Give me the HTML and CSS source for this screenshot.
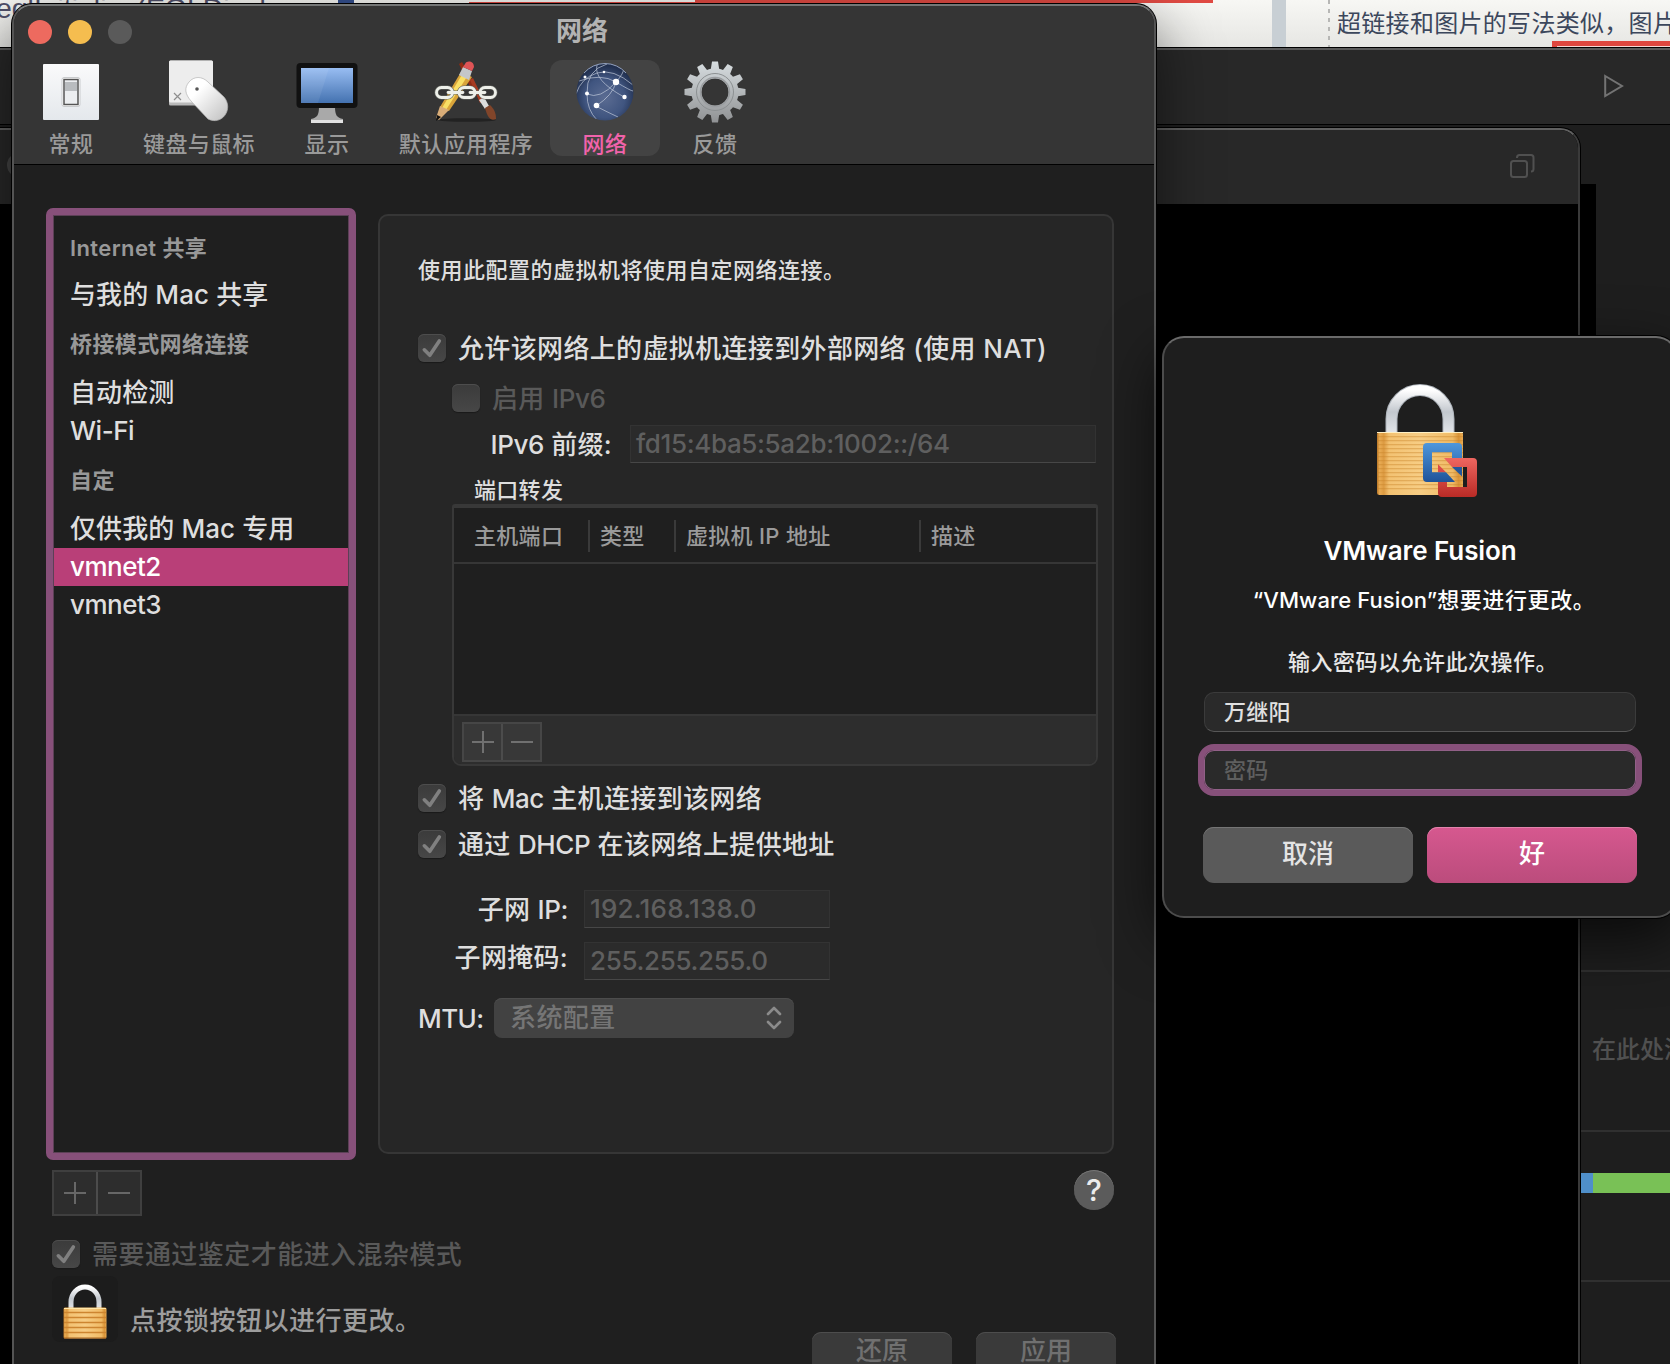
FILE: index.html
```html
<!DOCTYPE html>
<html lang="zh-CN">
<head>
<meta charset="utf-8">
<title>网络</title>
<link rel="stylesheet" href="styles.css">
</head>
<body>
<svg class="defs" width="0" height="0" aria-hidden="true">
  <defs>
    <linearGradient id="steel" x1="0" y1="0" x2="0" y2="1"><stop offset="0" stop-color="#fff"/><stop offset=".5" stop-color="#c3c8ce"/><stop offset="1" stop-color="#e3e6ea"/></linearGradient>
    <linearGradient id="brass" x1="0" y1="0" x2="1" y2="0"><stop offset="0" stop-color="#b87425"/><stop offset=".03" stop-color="#e9ac54"/><stop offset=".08" stop-color="#dc9a41"/><stop offset=".14" stop-color="#f3c272"/><stop offset=".5" stop-color="#f7cd84"/><stop offset=".88" stop-color="#f0bb66"/><stop offset=".95" stop-color="#d99438"/><stop offset="1" stop-color="#e9ac54"/></linearGradient>
    <pattern id="lines" width="8" height="4" patternUnits="userSpaceOnUse"><rect width="8" height="1.3" fill="#c98428" opacity=".42"/></pattern>
    <symbol id="tick" viewBox="0 0 28 28"><path d="M6.3 15.8 11.8 21.3 21.3 7" fill="none" stroke="#808080" stroke-width="3.6" stroke-linecap="round" stroke-linejoin="round"/></symbol>
  </defs>
</svg>
<div class="desktop">
  <div class="docs">
    <div class="code-line">eglInitialize(EGLDisplay</div>
    <i class="tab-mark"></i><i class="red-thin"></i><i class="red-thick"></i>
    <i class="gutter"></i><i class="dashes"></i>
    <div class="doc-text">超链接和图片的写法类似，图片</div>
    <i class="red-box"></i>
  </div>

  <div class="studio">
    <div class="studio-bar">
      <svg width="24" height="26" viewBox="0 0 24 26"><path d="M3.2 3 20 13 3.2 23Z" fill="none" stroke="#737373" stroke-width="2"/></svg>
    </div>
    <div class="studio-side">
      <div class="side-cell gap"></div>
      <div class="side-cell note">在此处添加</div>
      <div class="side-cell meter"><i></i><b></b></div>
      <div class="side-cell last"></div>
    </div>
  </div>
  <i class="black-sheet"></i>

  <div class="vm">
    <div class="vm-bar">
      <i class="vm-dot"></i>
      <svg width="26" height="26" viewBox="0 0 26 26" fill="none" stroke="#505050" stroke-width="2"><rect x="2" y="8" width="16" height="16" rx="2.5"/><path d="M8 5V4.500a2.500 2.500 0 0 1 2.500-2.500H22a2.500 2.500 0 0 1 2.500 2.500V16a2.500 2.500 0 0 1-2.500 2.500"/></svg>
    </div>
  </div>

  <main class="prefs">
    <header class="prefs-head">
      <div class="titlebar">
        <div class="lights"><i class="close"></i><i class="min"></i><i class="zoom"></i></div>
        <h1>网络</h1>
      </div>
      <nav class="tools">
        <div class="tool">
          <svg width="64" height="64" viewBox="0 0 64 64"><defs><linearGradient id="plate" x1="0" y1="0" x2="0" y2="1"><stop offset="0" stop-color="#fafafb"/><stop offset="1" stop-color="#e4e8ec"/></linearGradient></defs><rect x="4" y="4" width="56" height="56" rx="1" fill="url(#plate)"/><rect x="23" y="17.500" width="18" height="29" rx="2" fill="#fff" stroke="#c9cbcd"/><rect x="25" y="19.500" width="14" height="25" fill="#eceef0" stroke="#555" stroke-width="1.500"/><rect x="26" y="22" width="12" height="9" fill="#b9bcbf"/></svg>
          <span>常规</span>
        </div>
        <div class="tool wide">
          <svg width="64" height="64" viewBox="0 0 64 64"><defs><linearGradient id="mouse" x1="0" y1="0" x2="1" y2="1"><stop offset=".3" stop-color="#fff"/><stop offset="1" stop-color="#bfbfbf"/></linearGradient></defs><rect x="2" y="0.500" width="44" height="45" rx="1.500" fill="#b9b9b9"/><rect x="2" y="0.500" width="44" height="42" rx="1.500" fill="#ededed"/><path d="m7 33 7 7m0-7-7 7" stroke="#8d8d8d" stroke-width="1.200"/><path d="M22 22C27 16 35 16 41 22L57 37C67 49 55 66 41 59L24 41C18 34 17 28 22 22Z" fill="url(#mouse)" stroke="#b4b4b4" stroke-width=".7"/><circle cx="30" cy="29" r="1.800" fill="#555"/></svg>
          <span>键盘与鼠标</span>
        </div>
        <div class="tool">
          <svg width="64" height="64" viewBox="0 0 64 64"><defs><linearGradient id="screen" x1="0" y1="0" x2="0" y2="1"><stop offset="0" stop-color="#98bdf2"/><stop offset="1" stop-color="#4472b0"/></linearGradient></defs><path d="M24 47h16c0 8 2 11 8 12v4H16v-4c6-1 8-4 8-12Z" fill="#a9a9a9"/><path d="M16 60h32v3H16Z" fill="#e2e2e2"/><rect x="1.500" y="3" width="61" height="45" rx="4" fill="#111"/><rect x="6" y="8" width="52" height="35" fill="url(#screen)"/><path d="M6 8H34L23 43H6Z" fill="#fff" opacity=".07"/></svg>
          <span>显示</span>
        </div>
        <div class="tool wider">
          <svg width="64" height="64" viewBox="0 0 64 64"><ellipse cx="33" cy="60" rx="29" ry="1.800" fill="#222"/><path d="m25 4 3-2 14 24-5 3Z" fill="#8f2b15"/><path d="m36 20 3-2 11 23-4 2Z" fill="#a63a20"/><path d="m45 40 5-3 5 9-4 3Z" fill="#ddd"/><path d="m51 48 5-3c5 5 6 9 6 14-5 2-8 0-11-11Z" fill="#81452a"/><path d="M27 12 38 17 15 51 6 47Z" fill="#d9a43a"/><path d="m29 13 5 2L12 50l-4-2Z" fill="#f9df65"/><path d="M6 46 15 50 5 60 2 58Z" fill="#d9ad78"/><path d="m3 55 4 2-5 4Z" fill="#111"/><path d="m29 7 9 4-3 9-10-5Z" fill="#c4c7c9"/><path d="M31 4c2-4 9-3 9 3l-2 4-9-4Z" fill="#df5456"/><g fill="none" stroke="#6b6d67" stroke-width="4"><rect x="2.500" y="27.500" width="16" height="10" rx="5"/><rect x="25" y="27.500" width="16" height="10" rx="5"/><rect x="46" y="27.500" width="15.500" height="10" rx="5"/><path d="M14 32.500h15M36 32.500h15"/></g><g fill="none" stroke="#eef0ea" stroke-width="2.800" stroke-linecap="round"><rect x="2.500" y="27.500" width="16" height="10" rx="5"/><rect x="25" y="27.500" width="16" height="10" rx="5"/><rect x="46" y="27.500" width="15.500" height="10" rx="5"/><path d="M14 32.500h15M36 32.500h15"/></g></svg>
          <span>默认应用程序</span>
        </div>
        <div class="tool selected">
          <svg width="64" height="64" viewBox="0 0 64 64"><defs><radialGradient id="globe" cx=".5" cy=".6" r=".58"><stop offset="0" stop-color="#5b6c92"/><stop offset=".6" stop-color="#405580"/><stop offset="1" stop-color="#1e2c4a"/></radialGradient><clipPath id="ball"><circle cx="32" cy="32" r="28.300"/></clipPath></defs><circle cx="32" cy="32" r="28.500" fill="url(#globe)"/><g clip-path="url(#ball)"><g fill="none" stroke="#c3ccdd" stroke-width=".8" opacity=".85"><path d="M3 34Q8 18 24 13T60 25M6 21Q28 13 43 22T60 31M14 34Q27 40 43 22T42 3M14 34Q13 10 34 4M14 34Q14 50 24 60M23 46Q40 35 43 22M23 46Q30 50 45 57M24 5Q20 20 51 37"/></g><g fill="#fff"><circle cx="43" cy="22" r="3.200"/><circle cx="23.500" cy="45.500" r="2.800"/><circle cx="51.500" cy="37" r="2.200"/><circle cx="14" cy="33.500" r="2"/><circle cx="12" cy="17" r="1.500"/><circle cx="31" cy="12" r="1.300"/></g></g><path d="M11 13A28 28 0 0 1 53 13" fill="none" stroke="#93a2c0" stroke-width="1"/></svg>
          <span>网络</span>
        </div>
        <div class="tool">
          <svg width="64" height="64" viewBox="-32 -32 64 64"><defs><linearGradient id="gear" gradientUnits="userSpaceOnUse" x1="0" y1="-31" x2="0" y2="31"><stop offset="0" stop-color="#d8dee1"/><stop offset="1" stop-color="#8f9193"/></linearGradient><path id="bar" d="M-3-30.500H3L4.300-22V22L3 30.500H-3L-4.300 22V-22Z"/><mask id="hole"><rect x="-32" y="-32" width="64" height="64" fill="#fff"/><circle r="13.500" fill="#000"/></mask></defs><g mask="url(#hole)"><rect x="-32" y="-32" width="64" height="64" fill="url(#gear)" clip-path="url(#gearshape)"/></g><clipPath id="gearshape"><circle r="23.500"/><use href="#bar"/><use href="#bar" transform="rotate(30)"/><use href="#bar" transform="rotate(60)"/><use href="#bar" transform="rotate(90)"/><use href="#bar" transform="rotate(120)"/><use href="#bar" transform="rotate(150)"/></clipPath><circle r="18.500" fill="none" stroke="#8c9092" stroke-width="1"/><circle r="14.500" fill="none" stroke="#9a9da0" stroke-width="1.500"/></svg>
          <span>反馈</span>
        </div>
      </nav>
    </header>

    <section class="columns">
      <aside class="nets">
        <h2>Internet 共享</h2>
        <p>与我的 Mac 共享</p>
        <h2>桥接模式网络连接</h2>
        <p>自动检测</p>
        <p class="latin">Wi-Fi</p>
        <h2>自定</h2>
        <p>仅供我的 Mac 专用</p>
        <p class="latin active">vmnet2</p>
        <p class="latin">vmnet3</p>
      </aside>

      <div class="panel">
        <p class="intro">使用此配置的虚拟机将使用自定网络连接。</p>
        <div class="check nat"><i><svg><use href="#tick"/></svg></i><span>允许该网络上的虚拟机连接到外部网络 (使用 NAT)</span></div>
        <div class="check ipv6 dim"><i></i><span>启用 <em>IPv6</em></span></div>
        <div class="field-row prefix"><label><em>IPv6</em> 前缀:</label><div class="field">fd15:4ba5:5a2b:1002::/64</div></div>
        <p class="ports-title">端口转发</p>
        <div class="ports">
          <div class="ports-head"><span>主机端口</span><span>类型</span><span>虚拟机 IP 地址</span><span>描述</span></div>
          <div class="ports-list"></div>
          <div class="ports-foot"><div class="pm small"><b><svg viewBox="0 0 22 22"><path d="M0 11H22M11 0V22"/></svg></b><b><svg viewBox="0 0 22 22"><path d="M0 11H22"/></svg></b></div></div>
        </div>
        <div class="check host"><i><svg><use href="#tick"/></svg></i><span>将 <em>Mac</em> 主机连接到该网络</span></div>
        <div class="check dhcp"><i><svg><use href="#tick"/></svg></i><span>通过 <em>DHCP</em> 在该网络上提供地址</span></div>
        <div class="field-row subnet"><label>子网 <em>IP:</em></label><div class="field ip">192.168.138.0</div></div>
        <div class="field-row subnet mask"><label>子网掩码:</label><div class="field">255.255.255.0</div></div>
        <div class="mtu"><label>MTU:</label><div class="popup"><span>系统配置</span><svg width="16" height="24" viewBox="0 0 16 24"><path d="m2 8 6-6 6 6M2 16l6 6 6-6" fill="none" stroke="#8b8b8b" stroke-width="2.600" stroke-linecap="round" stroke-linejoin="round"/></svg></div></div>
      </div>
    </section>

    <div class="under">
      <div class="pm"><b><svg viewBox="0 0 22 22"><path d="M0 11H22M11 0V22"/></svg></b><b><svg viewBox="0 0 22 22"><path d="M0 11H22"/></svg></b></div>
      <div class="help">?</div>
    </div>
    <div class="check promisc dim"><i><svg><use href="#tick"/></svg></i><span>需要通过鉴定才能进入混杂模式</span></div>
    <footer class="foot">
      <div class="lock"><svg width="44" height="56" viewBox="0 0 88 112"><path d="M16 52V36a28 30 0 0 1 56 0V52" fill="none" stroke="url(#steel)" stroke-width="10"/><rect x="1" y="47" width="86" height="62" rx="3" fill="url(#brass)"/><path d="M2 57H86M2 67H86M2 77H86M2 87H86M2 97H86" stroke="#cd8530" stroke-width="3"/><path d="M2 49H86" stroke="#ffe6a8" stroke-width="2"/><path d="M2 108H86" stroke="#a6601c" stroke-width="2"/></svg></div>
      <span>点按锁按钮以进行更改。</span>
      <div class="foot-btns"><b>还原</b><b>应用</b></div>
    </footer>
  </main>

  <section class="auth">
    <svg class="auth-icon" width="102" height="114" viewBox="0 0 102 114">
      <defs>
        <linearGradient id="fb" x1="0" y1="0" x2="0" y2="1"><stop offset="0" stop-color="#4f97dc"/><stop offset="1" stop-color="#1f5399"/></linearGradient>
        <linearGradient id="fr" x1="0" y1="0" x2="0" y2="1"><stop offset="0" stop-color="#ee6660"/><stop offset="1" stop-color="#b92b26"/></linearGradient>
      </defs>
      <path d="M15.500 50V35a28.500 29 0 0 1 57 0V50" fill="none" stroke="#aeb4bb" stroke-width="12"/>
      <path d="M15.500 50V35a28.500 29 0 0 1 57 0V50" fill="none" stroke="url(#steel)" stroke-width="10"/>
      <rect x="1" y="48" width="86" height="63" rx="2.500" fill="url(#brass)"/>
      <rect x="1" y="50" width="86" height="58" fill="url(#lines)"/>
      <path d="M1 48.500H87" stroke="#fff0c4"/>
      <path d="M62 98V109q0 4 4 4H97q4 0 4-4V78q0-4-4-4H68L76 83H91V103H71V98Z" fill="url(#fr)"/>
      <path d="M62 80.300 70 88.300H62Z" fill="#dc4a49"/>
      <path d="M51 59H82q4 0 4 4V74H76V68.300H56V88.300H70L79 98H51q-4 0-4-4V63q0-4 4-4Z" fill="url(#fb)"/>
      <path d="M76 83H86V92.500Z" fill="#24579c"/>
    </svg>
    <h2>VMware Fusion</h2>
    <p class="wants">“VMware Fusion”<span>想要进行更改。</span></p>
    <p class="ask">输入密码以允许此次操作。</p>
    <div class="input">万继阳</div>
    <div class="input focus">密码</div>
    <div class="auth-btns"><b>取消</b><b class="ok">好</b></div>
  </section>
</div>
</body>
</html>
```
FILE: styles.css
```css
* { box-sizing: border-box; margin: 0; padding: 0; }
body { background: #000; font-family: Inter, "Noto Sans CJK SC", sans-serif; font-size: 26px; font-weight: 500; color: #dedede; overflow: hidden; }
i, b { display: block; font-style: normal; font-weight: 500; }
em { font-style: normal; letter-spacing: -.4px; }
svg { display: block; flex: none; }
h1, h2, p, span, label { white-space: nowrap; }
.defs { position: absolute; }
.desktop { position: relative; width: 1670px; height: 1364px; overflow: hidden; background: #000; }

/* document window at the very back */
.docs { position: absolute; inset: 0 0 auto; height: 48px; background: linear-gradient(#f7f7f4, #e6e6e3); overflow: hidden; }
.docs > * { position: absolute; }
.code-line { left: -4px; top: -7px; font: 28.4px/30px "Liberation Sans", sans-serif; color: #50506a; }
.tab-mark { left: 338px; top: 0; width: 16px; height: 4px; background: #35508f; }
.red-thin { left: 469px; top: 2px; width: 226px; height: 2px; background: #df4a43; }
.red-thick { left: 695px; top: 0; width: 518px; height: 3px; background: #e04a43; }
.gutter { left: 1272px; top: 0; width: 14px; height: 48px; background: #c8cfd4; }
.dashes { left: 1328px; top: 0; width: 2px; height: 48px; background: repeating-linear-gradient(#b7b7b5 0 4px, transparent 4px 9px); }
.doc-text { left: 1337px; top: 4px; font: 24px/36px "Noto Sans CJK SC", sans-serif; letter-spacing: .3px; color: #3c475c; white-space: nowrap; }
.red-box { left: 1552px; top: 41px; width: 130px; height: 20px; border: 5px solid #df473f; background: #f5d8d4; }

.studio { position: absolute; left: -20px; right: -20px; top: 47px; bottom: 0; background: #1e1e1e; border-top: 1px solid #000; }
.studio-bar { height: 77px; background: #282828; border-top: 2px solid #5a5a5a; border-bottom: 1px solid #000; padding: 23px 64px 0 0; display: flex; justify-content: flex-end; }
.studio-side { margin-left: 1600px; padding-top: 787px; }
.side-cell { border-bottom: 2px solid #303030; display: flex; align-items: center; }
.gap { height: 60px; }
.note { height: 160px; padding: 0 0 7px 12px; font-size: 24px; color: #505050; white-space: nowrap; overflow: hidden; }
.meter { height: 150px; align-items: flex-start; padding-top: 41px; }
.meter i { width: 13px; height: 20px; background: #4f8fca; }
.meter b { flex: 1; height: 20px; background: #79c156; }
.last { border: 0; }
.black-sheet { position: absolute; left: 1570px; top: 184px; width: 26px; height: 500px; background: #000; }

.vm { position: absolute; left: -38px; top: 128px; width: 1618px; height: 1300px; background: #000; border: 2px solid #3a3a3a; border-top-color: #606060; border-radius: 20px; overflow: hidden; box-shadow: 0 0 0 1px #000; }
.vm-bar { height: 74px; background: #282828; display: flex; justify-content: space-between; padding: 23px 43px 0; }
.vm-dot { width: 24px; height: 24px; border-radius: 50%; background: #444; }

/* preferences window */
.prefs { position: absolute; left: 12px; top: 4px; width: 1144px; height: 1400px; background: #1f1f1f; border: 2px solid #545454; border-top-color: #747676; border-radius: 20px; overflow: hidden; box-shadow: 0 0 0 1px #000, 0 20px 60px rgba(0,0,0,.55); display: flex; flex-direction: column; }
.prefs-head { height: 159px; flex: none; background: #353535; border-bottom: 1px solid #000; }
.titlebar { height: 54px; display: grid; grid-template-columns: 1fr auto 1fr; align-items: start; }
.lights { display: flex; gap: 16px; padding: 14px 0 0 14px; }
.lights i { width: 24px; height: 24px; border-radius: 50%; }
.close { background: #ed6a5f; } .min { background: #f5bd4f; } .zoom { background: #5a5a5a; }
h1 { font-size: 26px; line-height: 50px; font-weight: 600; color: #b3b3b3; transform: translateX(-2px); }
.tools { display: flex; padding-left: 2px; }
.tool { width: 110px; height: 96px; display: flex; flex-direction: column; align-items: center; color: #9a9a9a; font-size: 22px; line-height: 32px; border-radius: 12px; letter-spacing: .4px; }
.tool.wide { width: 146px; } .tool.wider { width: 168px; }
.tool span { margin-top: 4px; }
.tool.selected { background: #434343; color: #f163ab; }

.columns { display: flex; align-items: flex-start; padding: 43px 0 0 32px; gap: 22px; }
.nets { width: 310px; height: 952px; border: 7px solid #87507a; border-radius: 7px; padding-top: 4px; outline: 1px solid #5c4056; outline-offset: -8px; }
.nets h2 { height: 60px; line-height: 60px; font-size: 22px; font-weight: 600; color: #989898; padding-left: 17px; letter-spacing: .4px; }
.nets h2:first-child { height: 57px; line-height: 58px; }
.nets p { height: 38px; line-height: 37px; padding-left: 17px; letter-spacing: .1px; }
.nets p.latin { letter-spacing: -.5px; }
.nets .active { background: #b93f78; color: #fff; margin: 0 1px; padding-left: 16px; }
.panel { width: 736px; height: 940px; margin-top: 6px; background: #262626; border: 2px solid #363636; border-radius: 10px; padding: 34px 14px 0 38px; }
.intro { font-size: 22px; line-height: 40px; letter-spacing: .5px; }
.check { display: flex; align-items: center; height: 28px; gap: 12px; letter-spacing: .35px; }
.check i { width: 28px; height: 28px; flex: none; border-radius: 6px; background: linear-gradient(#3b3b3b, #474747); box-shadow: inset 0 1px #4d4d4d, 0 1px 1px #1a1a1a; }
.check i svg { width: 28px; height: 28px; }
.check span { margin-top: -3px; }
.dim { color: #595959; }
.nat { margin-top: 44px; }
.ipv6 { margin: 22px 0 0 34px; }
.field-row { display: flex; align-items: center; height: 38px; }
.field-row label { text-align: right; letter-spacing: .3px; margin-top: -3px; }
.field { height: 38px; line-height: 36px; padding-left: 5px; background: #2b2b2b; border: 1px solid #333; border-bottom: 1px solid #474747; color: #5f5f5f; white-space: nowrap; letter-spacing: -.4px; }
.field:not(.ip) { letter-spacing: -.35px; }
.field.ip { letter-spacing: .2px; }
.prefix { margin-top: 13px; } .prefix label { width: 194px; margin-right: 18px; } .prefix .field { flex: 1; margin-right: 2px; }
.ports-title { font-size: 22px; line-height: 36px; margin: 9px 0 0 56px; letter-spacing: .3px; }
.ports { margin: -4px 0 0 34px; width: 646px; height: 262px; border: 2px solid #383838; border-top-width: 4px; border-radius: 3px 3px 9px 9px; overflow: hidden; display: flex; flex-direction: column; }
.ports-head { height: 56px; background: #1f1f1f; border-bottom: 2px solid #363636; display: grid; grid-template-columns: 134px 86px 245px 1fr; align-items: center; font-size: 22px; color: #9a9a9a; }
.ports-head span { height: 32px; line-height: 32px; border-left: 2px solid #3a3a3a; padding-left: 10px; margin-top: 1px; letter-spacing: .3px; }
.ports-head span:first-child { border: 0; padding-left: 20px; }
.ports-list { flex: 1; background: #1f1f1f; }
.ports-foot { height: 50px; background: #2d2d2d; border-top: 2px solid #363636; padding: 6px 8px; }
.pm { display: flex; width: 90px; height: 46px; border: 2px solid #3f3f3f; background: #2d2d2d; }
.pm b { flex: 1; display: grid; place-items: center; }
.pm b + b { border-left: 2px solid #4c4c4c; }
.pm svg { width: 22px; height: 22px; stroke: #676767; stroke-width: 2; }
.pm.small { width: 80px; height: 40px; background: #383838; border-color: #464646; }
.pm.small svg { stroke: #707070; }
.host { margin-top: 18px; } .dhcp { margin-top: 18px; }
.subnet { margin-top: 32px; } .subnet label { width: 150px; margin-right: 16px; } .subnet .field { width: 246px; }
.subnet.mask { margin-top: 14px; } .mask label { transform: translateY(-4px); }
.mtu { margin-top: 18px; display: flex; align-items: center; height: 40px; }
.mtu label { width: 76px; letter-spacing: -.6px; }
.popup { width: 300px; height: 40px; border-radius: 8px; background: #424242; box-shadow: inset 0 1px #4c4c4c; color: #757575; display: flex; align-items: center; justify-content: space-between; padding: 0 12px 0 16px; letter-spacing: .4px; }
.popup span { transform: translateY(-3px); }
.under { display: flex; justify-content: space-between; padding: 10px 40px 0 38px; }
.help { width: 40px; height: 40px; border-radius: 50%; background: #5b5b5b; box-shadow: inset 0 1px #757575; text-align: center; line-height: 40px; font-size: 30px; font-weight: 500; color: #ececec; }
.promisc { margin: 24px 0 0 38px; letter-spacing: .45px; }
.foot { display: flex; padding: 8px 38px 0 38px; }
.lock { width: 66px; height: 66px; border-radius: 8px; background: #1c1c1c; display: flex; justify-content: center; padding-top: 8px; }
.foot > span { margin-left: 12px; line-height: 90px; color: #9d9d9d; letter-spacing: .5px; }
.foot-btns { margin: 56px 0 0 auto; display: flex; gap: 24px; }
.foot-btns b { width: 140px; height: 44px; border-radius: 9px; background: #3a3a3a; box-shadow: inset 0 1px #4d4d4d; color: #707070; text-align: center; line-height: 38px; }

/* authentication dialog */
.auth { position: absolute; left: 1162px; top: 336px; width: 516px; height: 582px; background: #1e1e1e; border: 2px solid #4c4c4c; border-top-color: #6a6a6a; border-radius: 22px; box-shadow: 0 0 0 1px #000, 0 20px 60px rgba(0,0,0,.7); display: flex; flex-direction: column; align-items: center; color: #fff; }
.auth-icon { margin: 46px 0 0 14px; }
.auth h2 { font-size: 26px; line-height: 40px; font-weight: 600; margin-top: 33px; letter-spacing: -.1px; }
.wants { font-size: 22px; line-height: 36px; margin-top: 11px; padding-left: 8px; letter-spacing: .1px; }
.wants span { letter-spacing: .6px; }
.ask { font-size: 22px; line-height: 36px; margin-top: 26px; padding-left: 6px; color: #e8e8e8; letter-spacing: .5px; }
.input { width: 432px; height: 40px; margin-top: 12px; border-radius: 10px; background: #2a2a2a; border: 1px solid #3b3b3b; border-bottom-color: #575757; padding-left: 19px; font-size: 22px; line-height: 38px; letter-spacing: .3px; color: #e0e0e0; }
.input.focus { width: 444px; height: 52px; border: 6px solid #87507a; border-radius: 16px; padding-left: 20px; color: #5f5f5f; line-height: 40px; box-shadow: inset 0 0 0 1px #916087; }
.auth-btns { display: flex; gap: 14px; margin-top: 31px; }
.auth-btns b { width: 210px; height: 56px; border-radius: 11px; background: #5a5a5a; box-shadow: inset 0 1px #757575; text-align: center; line-height: 54px; color: #e4e4e4; }
.auth-btns .ok { background: linear-gradient(#d6588f, #bb4c7c); box-shadow: inset 0 1px #e284ac; color: #fff; }
```
